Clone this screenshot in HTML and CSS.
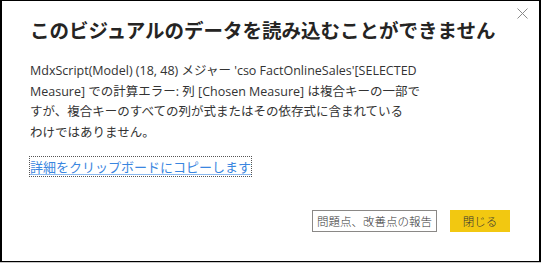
FILE: index.html
```html
<!DOCTYPE html>
<html lang="ja">
<head>
    <meta charset="UTF-8">
    <title>エラー</title>
    <link rel="stylesheet" href="styles.css">
</head>
<body>
    <div class="dialog">
        <button class="close-btn" aria-label="閉じる">
            <svg width="11" height="11" viewBox="0 0 11 11"><path d="M0.5 0.5 L10.5 10.5 M10.5 0.5 L0.5 10.5" stroke="#8a8a8a" stroke-width="1" fill="none"/></svg>
        </button>
        <h1 class="dialog-title">このビジュアルのデータを読み込むことができません</h1>
        <p class="dialog-message">
            MdxScript(Model) (18, 48) メジャー 'cso FactOnlineSales'[SELECTED<br>
            Measure] での計算エラー: 列 [Chosen Measure] は複合キーの一部で<br>
            すが、複合キーのすべての列が式またはその依存式に含まれている<br>
            わけではありません。
        </p>
        <div class="dialog-link-row">
            <a class="copy-link" href="#">詳細をクリップボードにコピーします</a>
        </div>
        <div class="dialog-actions">
            <button class="btn btn-secondary">問題点、改善点の報告</button>
            <button class="btn btn-primary">閉じる</button>
        </div>
    </div>
</body>
</html>
```

FILE: styles.css
```css
* {
    margin: 0;
    padding: 0;
    box-sizing: border-box;
}

body {
    width: 541px;
    height: 263px;
    background: #c8c8c8;
    font-family: 'Open Sans', 'Noto Sans CJK JP', sans-serif;
    color: #252423;
}

/* ダイアログ */
.dialog {
    position: relative;
    width: 541px;
    height: 262px;
    background: #fff;
    border: 1px solid #000;
    border-left-width: 2px;
    border-right-width: 2px;
    padding: 14px 0 0 28px;
}

.close-btn {
    position: absolute;
    top: 7px;
    right: 11px;
    border: none;
    background: none;
    width: 11px;
    height: 11px;
    display: flex;
}

.dialog-title {
    font-family: 'Noto Sans CJK JP', sans-serif;
    font-size: 19.5px;
    font-weight: 700;
    line-height: 30px;
    color: #252423;
}

.dialog-message {
    margin-top: 16px;
    font-size: 12.5px;
    line-height: 20.5px;
    color: #333;
}

.dialog-link-row {
    margin-top: 12px;
}

.copy-link {
    font-family: 'Noto Sans CJK JP', sans-serif;
    font-size: 13px;
    line-height: 18px;
    color: #3a86e0;
    text-decoration: underline;
    text-decoration-color: #8ab8ee;
    text-underline-offset: 2px;
    outline: 1px dotted #555;
    outline-offset: 0;
}

.dialog-actions {
    display: flex;
    justify-content: flex-end;
    gap: 13px;
    margin-top: 33px;
    padding-right: 29px;
}

.btn {
    font-family: 'Noto Sans CJK JP', sans-serif;
    font-size: 11.5px;
    font-weight: 300;
    height: 22px;
    color: #333;
    cursor: pointer;
}

.btn-secondary {
    width: 125px;
    background: #fff;
    border: 1px solid #8a8886;
}

.btn-primary {
    width: 60px;
    background: #f2c811;
    border: 1px solid #f2c811;
}
```
